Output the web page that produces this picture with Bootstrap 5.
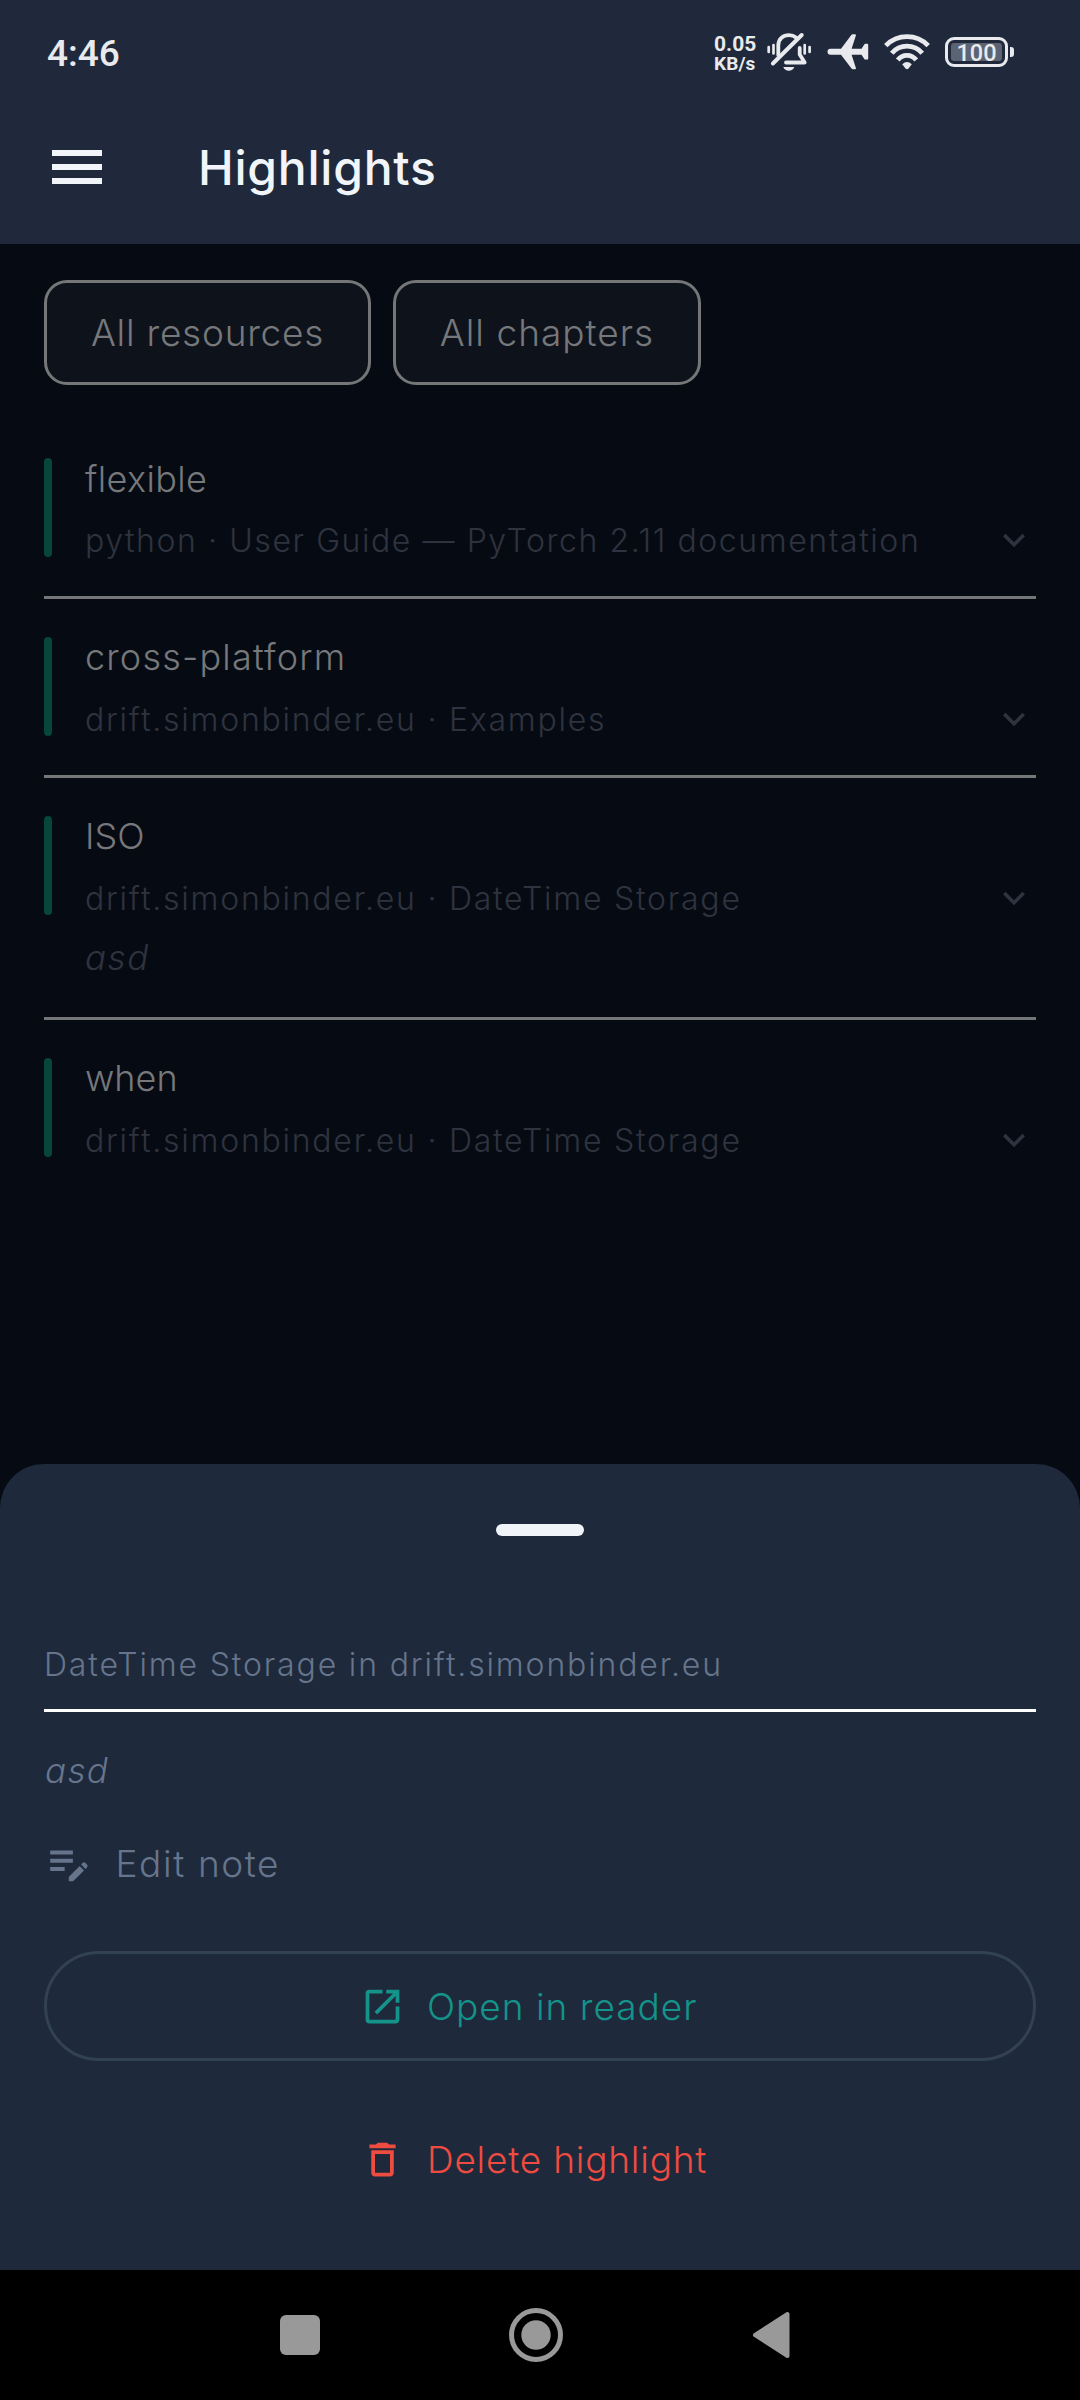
<!DOCTYPE html>
<html lang="en">
<head>
<meta charset="utf-8">
<meta name="viewport" content="width=device-width, initial-scale=1">
<title>Highlights</title>
<link href="https://cdn.jsdelivr.net/npm/bootstrap@5.3.0/dist/css/bootstrap.min.css" rel="stylesheet">
<style>
  body { background: #060b13; font-family: Inter, "Liberation Sans", sans-serif; font-weight: 300; color: #f1f5f9; overflow: hidden; }
  .phone { width: 1080px; height: 2400px; }

  /* status bar and app bar */
  .top-area { background: #1f293b; height: 244px; }
  .status { height: 90px; padding: 14px 66px 0 47px; font-family: Roboto, sans-serif; color: #e8eaed; }
  .clock { font-size: 37px; font-weight: 500; line-height: 76px; padding-top: 4px; }
  .net { font-size: 21px; font-weight: 700; line-height: 19px; margin-right: 10px; width: 42px; padding-top: 4px; }
  .net-unit { font-size: 19px; letter-spacing: .1px; }
  .gap-icon { margin-left: 14px; }
  .bell + .gap-icon { margin-left: 15px; }
  .batt { width: 63px; height: 30px; border: 3px solid #e8eaed; border-radius: 9px; padding: 3px; }
  .batt-fill { background: #5c6473; border-radius: 3px; font-size: 23.5px; font-weight: 500; line-height: 20px; height: 18px; }
  .batt-cap { width: 4px; height: 10px; background: #e8eaed; border-radius: 0 3px 3px 0; margin-left: 2px; }
  .appbar { height: 154px; padding-left: 52px; }
  .menu-line { width: 50px; height: 6px; background: #f1f5f9; }
  .title { font-size: 48px; font-weight: 500; line-height: 60px; letter-spacing: .75px; margin: 2px 0 0 96px; }

  /* dimmed list */
  .page { height: 1220px; padding: 36px 44px 0; color: #76787b; }
  .chips { gap: 22px; margin-bottom: 35px; }
  .chip { height: 105px; border: 3px solid #757678; border-radius: 23px; background: #0e131b; font-size: 37px; padding-top: 1px; }
  .chip-res { width: 327px; letter-spacing: .75px; }
  .chip-chap { width: 308px; letter-spacing: 1.02px; }
  .hl { padding-top: 38px; }
  .hl-bar { width: 8px; height: 99px; border-radius: 4px; background: #06463d; margin-right: 33px; }
  .hl-title { font-size: 36px; line-height: 43px; letter-spacing: .35px; }
  .hl-wide { letter-spacing: 1.2px; line-height: 41px; padding-bottom: 2px; }
  .hl-snug { letter-spacing: 0; line-height: 41px; padding-bottom: 2px; }
  .hl-sub { font-size: 32px; line-height: 46px; height: 44px; margin-top: 17px; letter-spacing: 1.76px; color: #2f333f; }
  .hl-long { letter-spacing: 1.57px; }
  .hl-sub svg { width: 44px; height: 44px; }
  .hl-note { font-size: 35px; line-height: 42px; margin-top: 16px; font-style: italic; letter-spacing: 1.5px; color: #2f333f; }
  .hl-body { height: 138px; }
  .hl-body.tall { height: 201px; }
  .rule { height: 3px; background: #757678; }

  /* bottom sheet */
  .sheet { height: 806px; background: #1e293b; border-radius: 44px 44px 0 0; padding: 60px 44px 0; color: #66758c; }
  .grip { width: 88px; height: 12px; border-radius: 6px; background: #f1f5f9; }
  .src { font-size: 32px; line-height: 46px; letter-spacing: 1.84px; margin-top: 106px; height: 67px; }
  .rule-light { height: 3px; background: #fff; }
  .snote { font-size: 35px; font-style: italic; letter-spacing: 1.3px; line-height: 50px; margin-top: 33px; padding-left: 1px; }
  .act { font-size: 37px; }
  .act span { margin-left: 22px; padding-top: 1px; }
  .edit { height: 110px; margin-top: 13px; letter-spacing: 1.6px; }
  .open { height: 110px; border: 3px solid #334155; border-radius: 55px; margin-top: 33px; padding-left: 313px; color: #14938a; letter-spacing: 1px; }
  .del { height: 110px; margin-top: 43px; padding-left: 316px; color: #ee4c41; letter-spacing: .78px; }

  /* system navigation */
  .navbtns { height: 130px; background: #000; padding-left: 280px; gap: 189px; }
</style>
</head>
<body>
<div class="phone d-flex flex-column">
  <header class="top-area">
    <div class="status d-flex align-items-center">
      <div class="clock me-auto">4:46</div>
      <div class="net"><div>0.05</div><div class="net-unit">KB/s</div></div>
      <svg class="bell" width="46" height="40" viewBox="0 0 46 40" fill="none" stroke="#e8eaed" stroke-width="3.8" stroke-linecap="round"><path d="M12.3 23V13.5C12.3 7 17 3.2 23 3.2c3 0 5.2.8 7 2.2M33.7 16v6.5l5 8H20" stroke-linejoin="round"/><path d="M6.9 31.5 35.7 3" stroke-width="4"/><path d="M2.7 15v5M7.5 13v8.5M38.7 13v8.5M43.6 15v5" stroke-width="2.7"/><path d="M17.3 35h11c-1 2.6-3 3.700-5.500 3.700s-4.500-1.100-5.500-3.700z" fill="#e8eaed" stroke="none"/></svg>
      <svg class="gap-icon" width="42" height="38" viewBox="0 0 42 38" fill="#e8eaed"><path d="M3.500 15.700H14L24.500 1.800q.5-.6 1.200-.6H28q1.200 0 .9 1.200L24.600 15.700h9.900l2.800-4.300q.4-.6 1-.6h2q.9 0 .9.900V25.700q0 .9-.9.900h-2q-.6 0-1-.6l-2.800-4.300h-9.900l4.300 13.300q.3 1.200-.9 1.200h-2.300q-.7 0-1.200-.6L14 21.700H3.500a3 3 0 0 1 0-6z"/></svg>
      <svg class="gap-icon" width="48" height="38" viewBox="0 0 48 38" fill="none" stroke="#e8eaed" stroke-width="4.8"><path d="M2.800 12.700A29.500 29.500 0 0 1 45.200 12.700M8.800 20.200A20 20 0 0 1 39.200 20.200M14.800 27A11.500 11.500 0 0 1 33.200 27"/><path d="M19.200 31.300Q24 26.500 28.800 31.300L25.500 35.500Q24 36.800 22.500 35.500z" fill="#e8eaed" stroke="none"/></svg>
      <div class="batt gap-icon"><div class="batt-fill text-center">100</div></div><div class="batt-cap"></div>
    </div>
    <div class="appbar d-flex align-items-center">
      <div class="d-flex flex-column gap-2"><div class="menu-line"></div><div class="menu-line"></div><div class="menu-line"></div></div>
      <h1 class="title">Highlights</h1>
    </div>
  </header>

  <main class="page">
    <div class="chips d-flex">
      <div class="chip chip-res d-flex align-items-center justify-content-center">All resources</div>
      <div class="chip chip-chap d-flex align-items-center justify-content-center">All chapters</div>
    </div>
    <div class="hl d-flex"><div class="hl-bar"></div><div class="hl-body flex-grow-1">
      <div class="hl-title">flexible</div>
      <div class="hl-sub hl-long d-flex justify-content-between"><span>python · User Guide — PyTorch 2.11 documentation</span><svg viewBox="0 0 24 24" fill="currentColor"><path d="M16.590 8.590 12 13.170 7.410 8.590 6 10l6 6 6-6z"/></svg></div>
    </div></div>
    <div class="rule"></div>
    <div class="hl d-flex"><div class="hl-bar"></div><div class="hl-body flex-grow-1">
      <div class="hl-title hl-wide">cross-platform</div>
      <div class="hl-sub d-flex justify-content-between"><span>drift.simonbinder.eu · Examples</span><svg viewBox="0 0 24 24" fill="currentColor"><path d="M16.590 8.590 12 13.170 7.410 8.590 6 10l6 6 6-6z"/></svg></div>
    </div></div>
    <div class="rule"></div>
    <div class="hl d-flex"><div class="hl-bar"></div><div class="hl-body tall flex-grow-1">
      <div class="hl-title hl-snug">ISO</div>
      <div class="hl-sub d-flex justify-content-between"><span>drift.simonbinder.eu · DateTime Storage</span><svg viewBox="0 0 24 24" fill="currentColor"><path d="M16.590 8.590 12 13.170 7.410 8.590 6 10l6 6 6-6z"/></svg></div>
      <div class="hl-note">asd</div>
    </div></div>
    <div class="rule"></div>
    <div class="hl d-flex"><div class="hl-bar"></div><div class="hl-body flex-grow-1">
      <div class="hl-title hl-snug">when</div>
      <div class="hl-sub d-flex justify-content-between"><span>drift.simonbinder.eu · DateTime Storage</span><svg viewBox="0 0 24 24" fill="currentColor"><path d="M16.590 8.590 12 13.170 7.410 8.590 6 10l6 6 6-6z"/></svg></div>
    </div></div>
  </main>

  <section class="sheet">
    <div class="grip mx-auto"></div>
    <div class="src">DateTime Storage in drift.simonbinder.eu</div>
    <div class="rule-light"></div>
    <div class="snote">asd</div>
    <div class="edit act d-flex align-items-center"><svg width="49.5" height="49.5" viewBox="0 0 24 24" fill="currentColor"><path d="M3 10h11v2H3v-2zm0-2h11V6H3v2zm0 8h7v-2H3v2zm15.010-3.130.71-.71a1 1 0 0 1 1.410 0l.71.71c.39.39.39 1.020 0 1.410l-.71.71-2.120-2.120zm-.71.71-5.300 5.300V21h2.120l5.300-5.300-2.120-2.120z"/></svg><span>Edit note</span></div>
    <div class="open act d-flex align-items-center"><svg width="45" height="45" viewBox="0 0 24 24" fill="currentColor"><path d="M19 19H5V5h7V3H5a2 2 0 0 0-2 2v14a2 2 0 0 0 2 2h14c1.100 0 2-.9 2-2v-7h-2v7zM14 3v2h3.590l-9.830 9.830 1.410 1.410L19 6.410V10h2V3h-7z"/></svg><span>Open in reader</span></div>
    <div class="del act d-flex align-items-center"><svg width="45" height="45" viewBox="0 0 24 24" fill="currentColor"><path d="M6 19c0 1.100.9 2 2 2h8c1.100 0 2-.9 2-2V7H6v12zM8 9h8v10H8V9zm7.500-5-1-1h-5l-1 1H5v2h14V4z"/></svg><span>Delete highlight</span></div>
  </section>

  <nav class="navbtns d-flex align-items-center">
    <svg width="40" height="40"><rect width="40" height="40" rx="6" fill="#999"/></svg>
    <svg width="54" height="54" viewBox="0 0 54 54"><circle cx="27" cy="27" r="24.5" fill="none" stroke="#999" stroke-width="5"/><circle cx="27" cy="27" r="14.7" fill="#999"/></svg>
    <svg width="38" height="48" viewBox="0 0 38 48"><path d="M3 24 35.500 3v42z" fill="#999" stroke="#999" stroke-width="4" stroke-linejoin="round"/></svg>
  </nav>
</div>
<script src="https://cdn.jsdelivr.net/npm/bootstrap@5.3.0/dist/js/bootstrap.bundle.min.js"></script>
</body>
</html>
